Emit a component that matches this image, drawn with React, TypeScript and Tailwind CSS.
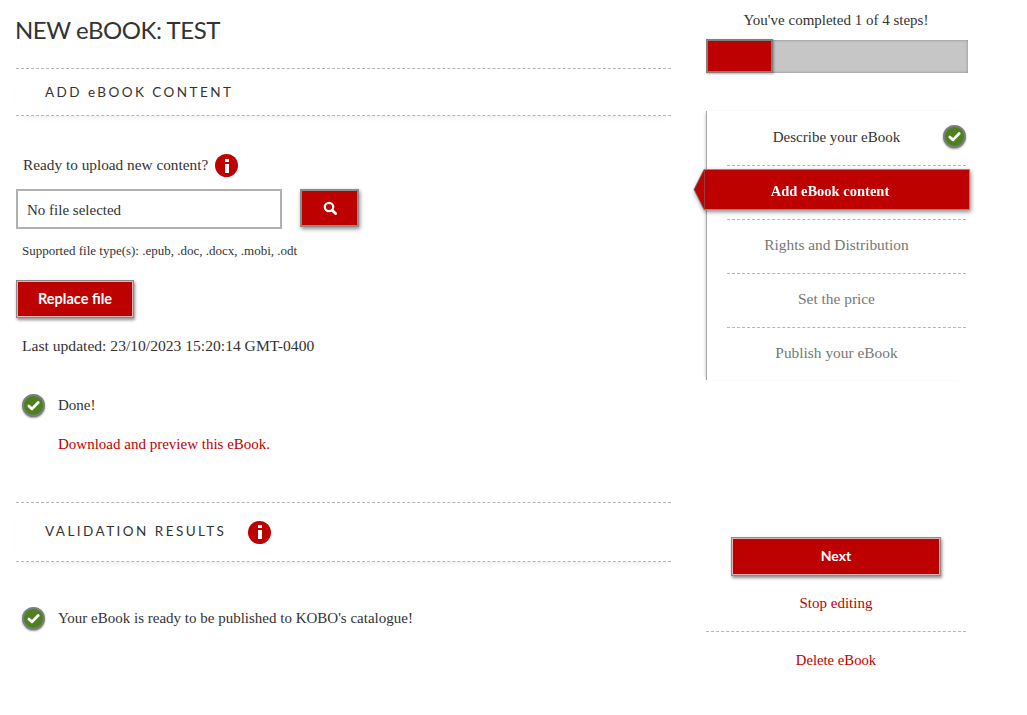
const serif = "font-['Liberation_Serif',serif]";

function CheckBadge() {
  return (
    <span className="flex size-[23px] shrink-0 items-center justify-center rounded-full border-2 border-[#77807a] bg-[#4f7f1f] shadow-[0_1px_2px_rgba(0,0,0,0.4)]">
      <svg viewBox="0 0 16 16" className="size-[15px]" fill="none" stroke="white" strokeWidth="3" strokeLinecap="round" strokeLinejoin="round">
        <path d="M3 8.6 6.4 11.6 13 4.8" />
      </svg>
    </span>
  );
}

function InfoBadge() {
  return (
    <span className="flex size-[23px] shrink-0 flex-col items-center justify-center gap-[2px] rounded-full bg-[#bd0000]">
      <span className="h-[3px] w-[4px] bg-white" />
      <span className="h-[9px] w-[4px] bg-white" />
    </span>
  );
}

function SectionHeader({ title, info, tall }: { title: string; info?: boolean; tall?: boolean }) {
  return (
    <div className={`flex items-center border-y border-dashed border-[#b5b5b5] pl-[29px] shadow-[0_5px_8px_-6px_rgba(0,0,0,0.12)] ${tall ? "h-[60px] pb-[2px]" : "h-[48px]"}`}>
      <h2 className="font-['Lato',sans-serif] text-[13.5px] tracking-[2.45px] text-[#333]">{title}</h2>
      {info && (
        <span className="ml-[22px] mt-[2px]">
          <InfoBadge />
        </span>
      )}
    </div>
  );
}

const steps = [
  { label: "Describe your eBook", done: true },
  { label: "Add eBook content", active: true },
  { label: "Rights and Distribution" },
  { label: "Set the price" },
  { label: "Publish your eBook" },
];

function StepRow({ label, done, active }: { label: string; done?: boolean; active?: boolean }) {
  if (active) {
    return (
      <div className="-ml-[34px] mt-[3px] flex h-[41px] w-[277px] drop-shadow-[1px_2px_2px_rgba(0,0,0,0.45)]">
        <svg viewBox="0 0 12 41" className="h-[41px] w-[12px] shrink-0">
          <polygon points="12,0.5 12,40.5 11,40.5 1,20.5 11,0.5" fill="#bd0000" stroke="#777" strokeWidth="1" />
        </svg>
        <div className="flex flex-1 items-center justify-center border border-l-0 border-[#8d8d8d] bg-[#bd0000] pr-[14px] pt-[5px] text-[14.5px] font-bold text-white">
          {label}
        </div>
      </div>
    );
  }
  return (
    <div className={`flex items-center justify-center pr-[20px] ${done ? "h-[53px] text-[#333]" : "h-[50px] text-[15.4px] text-[#777]"}`}>
      {label}
    </div>
  );
}

export default function App() {
  return (
    <div className={`${serif} flex h-[715px] bg-white pl-4 text-[15px] text-[#333]`}>
      <main className="w-[655px] shrink-0">
        <h1 className="-ml-px mb-[21px] mt-[12px] font-['Lato',sans-serif] text-[24px] leading-[35px] tracking-[-0.45px] text-[#333]">NEW eBOOK: TEST</h1>
        <SectionHeader title="ADD eBOOK CONTENT" />

        <div className="mt-[38px] flex items-center gap-[7px] pl-[7px]">
          <span className="text-[15.3px]">Ready to upload new content?</span>
          <InfoBadge />
        </div>

        <div className="mt-[12px] flex items-start gap-[18px]">
          <div className="flex h-[40px] w-[266px] items-center border-2 border-[#b0b0b0] pl-[9px] pt-[2px]">No file selected</div>
          <button className="flex h-[38px] w-[59px] items-center justify-center border-2 border-[#8c8c8c] bg-[#bd0000] shadow-[1px_2px_4px_rgba(0,0,0,0.45)]">
            <svg viewBox="0 0 14 14" className="size-[14px]" fill="none" stroke="white" strokeLinecap="round">
              <circle cx="6" cy="6" r="4.2" strokeWidth="2.3" />
              <path d="M9.4 9.4 12.6 12.6" strokeWidth="2.8" />
            </svg>
          </button>
        </div>

        <p className="mt-[13px] pl-[6px] text-[13px] leading-[18px]">Supported file type(s): .epub, .doc, .docx, .mobi, .odt</p>

        <button className="mt-[20px] block h-[38px] w-[118px] border border-[#8a8a8a] bg-[#bd0000] font-['Lato',sans-serif] text-[14.5px] font-bold text-white shadow-[inset_0_0_0_1px_#e3b4b4,1px_2px_3px_rgba(0,0,0,0.45)]">
          Replace file
        </button>

        <p className="mt-[18px] pl-[6px] text-[15.6px] leading-[20px]">Last updated: 23/10/2023 15:20:14 GMT-0400</p>

        <div className="mt-[38px] flex items-center gap-[13px] pl-[6px]">
          <CheckBadge />
          <span>Done!</span>
        </div>
        <a className="ml-[42px] mt-[17px] block leading-[20px] text-[#bd0000]">Download and preview this eBook.</a>

        <div className="mt-[48px]">
          <SectionHeader title="VALIDATION RESULTS" info tall />
        </div>

        <div className="mt-[45px] flex items-center gap-[13px] pl-[6px]">
          <CheckBadge />
          <span>Your eBook is ready to be published to KOBO's catalogue!</span>
        </div>
      </main>

      <aside className="ml-[35px] flex w-[260px] shrink-0 flex-col">
        <p className="mt-[10px] text-center leading-[20px]">You've completed 1 of 4 steps!</p>
        <div className="mt-[10px] h-[33px] w-[262px] bg-[#c6c6c6] shadow-[inset_0_0_3px_rgba(0,0,0,0.35)]">
          <div className="-mt-px h-[34px] w-[67px] border-2 border-[#7f7f7f] bg-[#bd0000] shadow-[1px_1px_2px_rgba(0,0,0,0.3)]" />
        </div>

        <nav className="mt-[38px] flex h-[269px] flex-col border-l border-[#a9a9a9] pl-[20px] shadow-[-2px_0_3px_-2px_rgba(0,0,0,0.3)]">
          {steps.map((step, i) => (
            <div key={step.label} className={`relative h-[54px] shrink-0 ${i > 0 ? "border-t border-dashed border-[#b5b5b5]" : ""}`}>
              <StepRow {...step} />
              {step.done && (
                <span className="absolute right-0 top-[14px]">
                  <CheckBadge />
                </span>
              )}
            </div>
          ))}
        </nav>

        <button className="mx-auto mt-[157px] block h-[39px] w-[210px] border border-[#8a8a8a] bg-[#bd0000] pb-[3px] font-['Lato',sans-serif] text-[14px] font-bold text-white shadow-[inset_0_0_0_1px_#e3b4b4,1px_2px_3px_rgba(0,0,0,0.45)]">
          Next
        </button>
        <a className="mt-[17px] block text-center leading-[20px] text-[#bd0000]">Stop editing</a>
        <div className="mt-[18px] border-t border-dashed border-[#b5b5b5]" />
        <a className="mt-[18px] block text-center text-[14.7px] leading-[20px] text-[#bd0000]">Delete eBook</a>
      </aside>
    </div>
  );
}
